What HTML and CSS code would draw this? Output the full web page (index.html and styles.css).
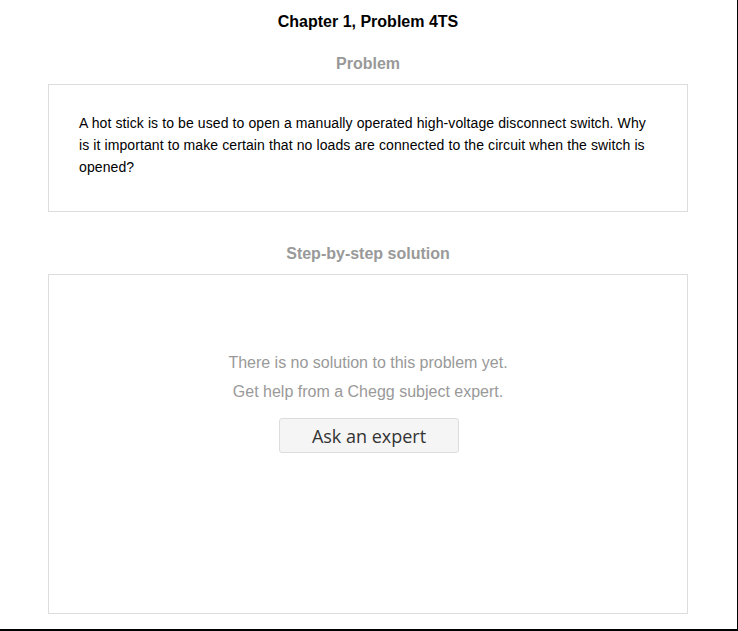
FILE: index.html
```html
<!DOCTYPE html>
<html>
<head>
<meta charset="utf-8">
<link rel="stylesheet" href="styles.css">
</head>
<body>
<div class="page">
  <h1 class="title">Chapter 1, Problem 4TS</h1>
  <h2 class="section-head">Problem</h2>
  <div class="card problem">
    <p>A hot stick is to be used to open a manually operated high-voltage disconnect switch. Why is it important to make certain that no loads are connected to the circuit when the switch is opened?</p>
  </div>
  <h2 class="section-head solution-head">Step-by-step solution</h2>
  <div class="card solution">
    <p class="empty">There is no solution to this problem yet.</p>
    <p class="empty">Get help from a Chegg subject expert.</p>
    <button class="ask">Ask an expert</button>
  </div>
</div>
</body>
</html>
```
FILE: styles.css
```css
html, body {
  margin: 0;
  padding: 0;
  background: #fff;
}
.page {
  box-sizing: border-box;
  width: 738px;
  height: 631px;
  border-right: 1px solid #000;
  border-bottom: 2px solid #000;
  padding: 13px 49px 0 48px;
  font-family: "Liberation Sans", Arial, sans-serif;
  display: flex;
  flex-direction: column;
}
.title {
  margin: 0;
  font-size: 16px;
  line-height: 18px;
  font-weight: bold;
  color: #000;
  text-align: center;
}
.section-head {
  margin: 24px 0 11px;
  font-size: 16px;
  line-height: 18px;
  font-weight: bold;
  color: #999;
  text-align: center;
}
.solution-head {
  margin-top: 33px;
}
.card {
  border: 1px solid #ddd;
  box-sizing: border-box;
}
.problem {
  height: 128px;
  padding: 27px 38px 0 30px;
}
.problem p {
  margin: 0;
  font-size: 14px;
  line-height: 22px;
  letter-spacing: 0.1px;
  color: #000;
}
.solution {
  height: 340px;
  padding-top: 73px;
  display: flex;
  flex-direction: column;
  align-items: center;
}
.empty {
  margin: 0;
  font-size: 16px;
  line-height: 29px;
  color: #999;
  text-align: center;
}
.ask {
  margin: 12px 0 0 2px;
  box-sizing: border-box;
  width: 180px;
  height: 35px;
  padding: 0;
  background: #f5f5f5;
  border: 1px solid #ddd;
  border-radius: 3px;
  font-family: "Open Sans", "Noto Sans", sans-serif;
  font-size: 18px;
  color: #333;
}
```
